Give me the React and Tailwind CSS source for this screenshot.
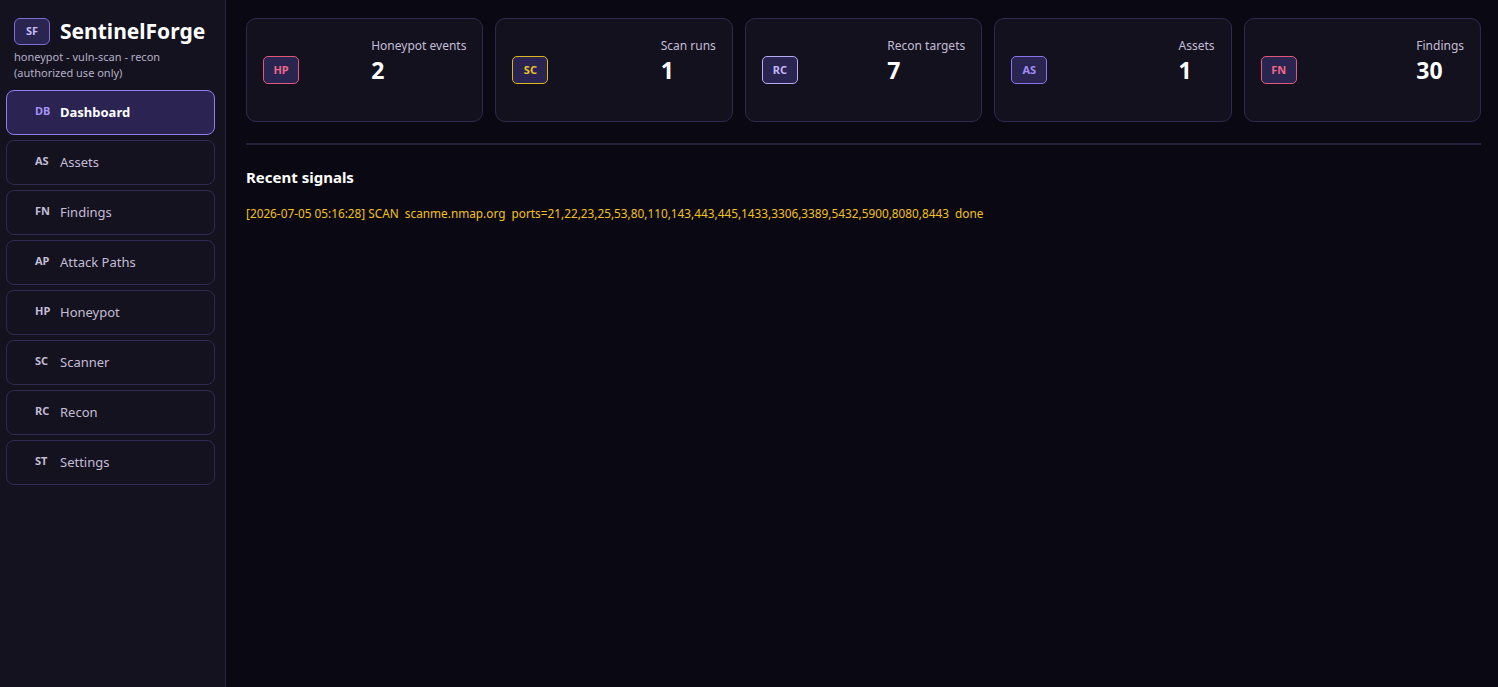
import React from "react";

const navItems = [
    { code: "DB", label: "Dashboard", active: true },
    { code: "AS", label: "Assets" },
    { code: "FN", label: "Findings" },
    { code: "AP", label: "Attack Paths" },
    { code: "HP", label: "Honeypot" },
    { code: "SC", label: "Scanner" },
    { code: "RC", label: "Recon" },
    { code: "ST", label: "Settings" },
];

const stats = [
    { code: "HP", label: "Honeypot events", value: "2", tone: "border-[#e0587a] text-[#ee6a88]" },
    { code: "SC", label: "Scan runs", value: "1", tone: "border-[#e0b21c] text-[#f0c229]" },
    { code: "RC", label: "Recon targets", value: "7", tone: "border-[#b8aaf5] text-[#c4b8fa]" },
    { code: "AS", label: "Assets", value: "1", tone: "border-[#8c73ee] text-[#a48cf7]" },
    { code: "FN", label: "Findings", value: "30", tone: "border-[#e0587a] text-[#ee6a88]" },
];

const signals = [
    "[2026-07-05 05:16:28] SCAN  scanme.nmap.org  ports=21,22,23,25,53,80,110,143,443,445,1433,3306,3389,5432,5900,8080,8443  done",
];

const Sidebar = () => (
    <aside className="w-[226px] shrink-0 bg-[#15121f] border-r border-[#2a2640] pl-[6px] pr-[10px] pt-[18px]">
        <div className="px-2">
            <div className="flex items-center gap-[10px]">
                <div className="w-[36px] h-[27px] rounded-[6px] border border-[#7c6cd8] bg-[#2a2450] flex items-center justify-center text-[11px] font-bold text-[#c5bbf5]">
                    SF
                </div>
                <h1 className="text-[21px] font-bold text-white leading-none">SentinelForge</h1>
            </div>
            <p className="mt-[4px] text-[11px] leading-[16px] text-[#b4afc6]">
                honeypot - vuln-scan - recon
                <br />
                (authorized use only)
            </p>
        </div>

        <nav className="mt-[9px] flex flex-col gap-[5px]">
            {navItems.map((item) => (
                <div
                    key={item.code}
                    className={
                        "h-[45px] rounded-[8px] border flex items-center pl-[28px] " +
                        (item.active
                            ? "border-[#8f7ef0] bg-[#2b2352]"
                            : "border-[#2f2a4f] bg-[#15121f]")
                    }
                >
                    <span
                        className={
                            "w-[25px] text-[11px] font-bold -translate-y-[1px] " +
                            (item.active ? "text-[#a594f5]" : "text-[#c3bdd6]")
                        }
                    >
                        {item.code}
                    </span>
                    <span
                        className={
                            "text-[13px] " +
                            (item.active ? "font-bold text-white" : "text-[#c3bdd6]")
                        }
                    >
                        {item.label}
                    </span>
                </div>
            ))}
        </nav>
    </aside>
);

const StatCard = ({ code, label, value, tone }) => (
    <div className="flex-1 h-[104px] rounded-[10px] border border-[#2e2a4f] bg-[#14111f] px-4 flex items-center justify-between">
        <div className={"w-[36px] h-[28px] rounded-[5px] border bg-[#2a2450] flex items-center justify-center text-[11px] font-bold " + tone}>
            {code}
        </div>
        <div className="self-start pt-[19px] flex flex-col">
            <span className="text-[12px] leading-[16px] text-[#c3bdd6]">{label}</span>
            <span className="text-[23px] leading-[32px] font-bold text-white">{value}</span>
        </div>
    </div>
);

export default function App() {
    return (
        <div
            className="flex h-[687px] w-full bg-[#0a0812] overflow-hidden"
            style={{ fontFamily: '"Noto Sans", "Open Sans", sans-serif' }}
        >
            <Sidebar />

            <main className="flex-1 pl-[20px] pr-[17px] pt-[18px]">
                <div className="flex gap-[12px]">
                    {stats.map((s) => (
                        <StatCard key={s.code} {...s} />
                    ))}
                </div>

                <div className="mt-[21px] h-[2px] bg-[#25213a]" />

                <h2 className="mt-[21px] text-[15px] font-bold text-white">Recent signals</h2>

                <div className="mt-[16px] flex flex-col gap-1">
                    {signals.map((line, i) => (
                        <div key={i} className="text-[11.8px] text-[#f2c21b] whitespace-pre">
                            {line}
                        </div>
                    ))}
                </div>
            </main>
        </div>
    );
}
